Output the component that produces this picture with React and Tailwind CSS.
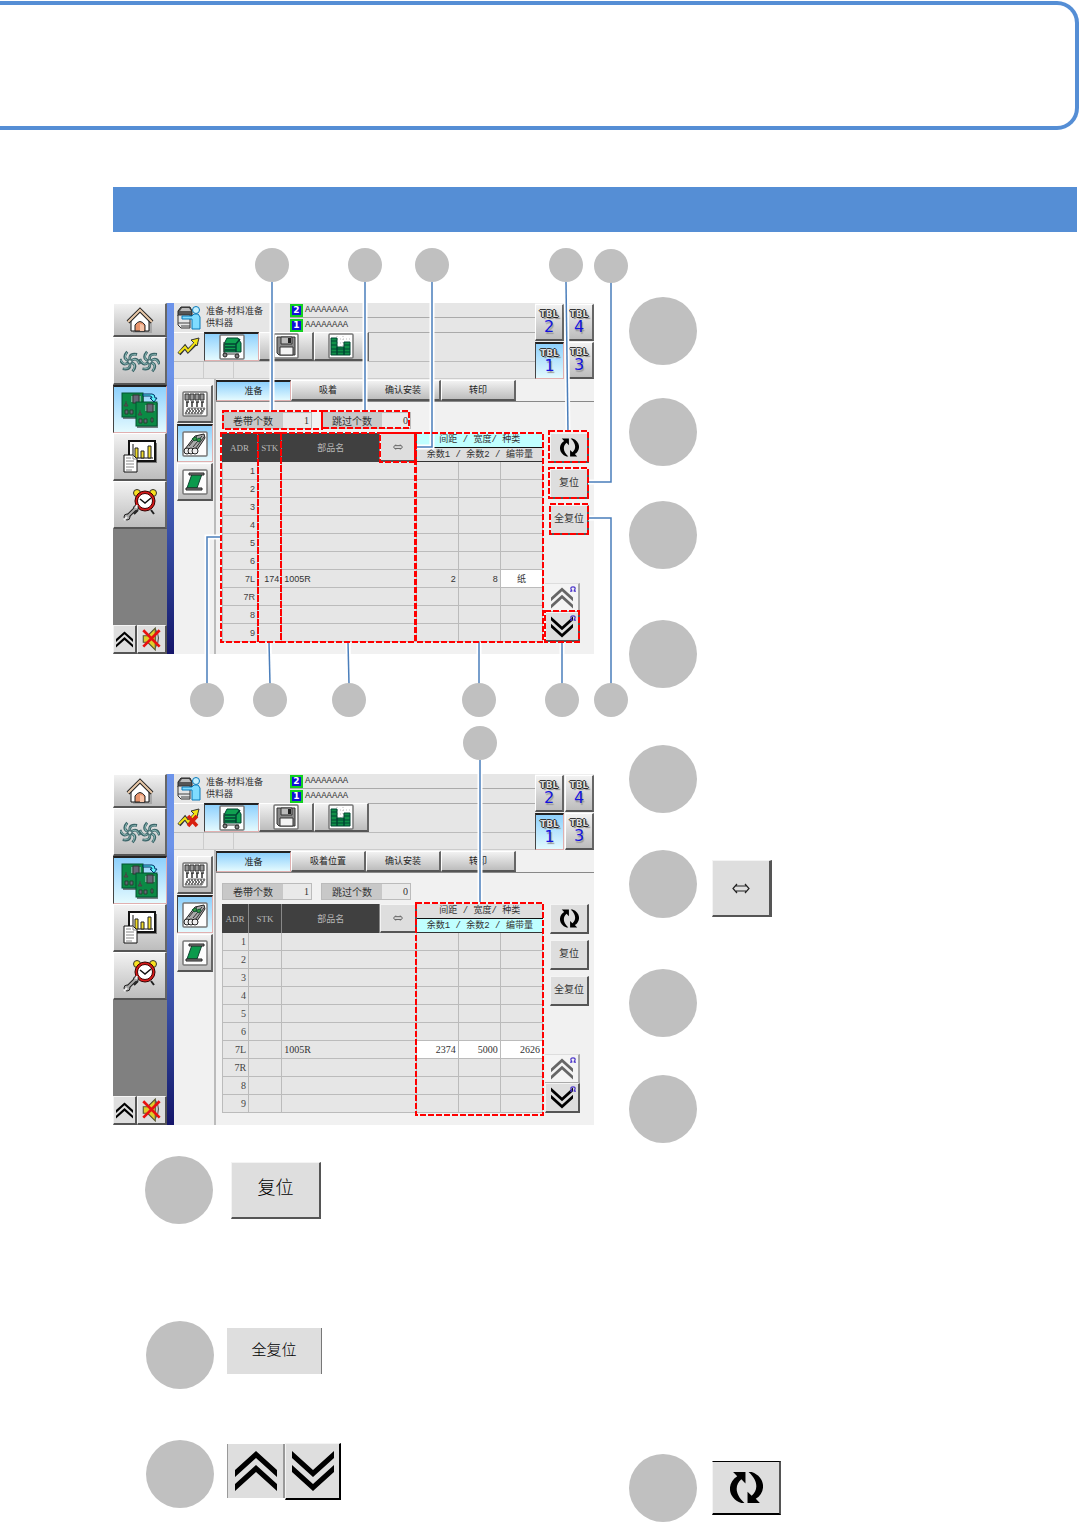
import clsx from "clsx";

const face =
  "flex items-center justify-center border-t border-l border-r-2 border-b-2 border-t-white border-l-white border-r-[#666] border-b-[#555] bg-linear-to-b from-[#f2f2f2] to-[#bdbdbd]";
const faceOn =
  "flex items-center justify-center border-t-2 border-l border-r border-b border-t-[#222] border-l-[#444] border-r-[#e0b0b0] border-b-[#e0b0b0] bg-linear-to-b from-[#8dd0fc] to-[#e4fafe]";
const flat =
  "flex items-center justify-center border-t border-l border-r-2 border-b-2 border-t-[#f4f4f4] border-l-[#f4f4f4] border-r-[#555] border-b-[#555] bg-[#dedede]";

function HomeIcon() {
  return (
    <svg width="28" height="28" viewBox="0 0 28 28">
      <path d="M7 16v11h19V15L16 6z" fill="#888" opacity=".5" />
      <path d="M5 13 14 5l9 8v12H5z" fill="#fff" stroke="#111" />
      <path d="m2 16 12-12 12 12" fill="none" stroke="#222" strokeWidth="4" />
      <path d="m2 16 12-12 12 12" fill="none" stroke="#e8c8a8" strokeWidth="2" />
      <path d="M9 25v-6q5-7 10 0v6z" fill="#e8946c" stroke="#222" />
      <path d="M14 25v-7q3 0 4 2v5z" fill="#f6c4a8" />
    </svg>
  );
}

function Fan({ x, y }) {
  return (
    <g transform={`translate(${x} ${y})`} fill="none">
      {[0, 60, 120, 180, 240, 300].map((a) => (
        <path key={a} d="M0-2C-1-8 3-9 8-8" stroke="#3a6468" strokeWidth="3" transform={`rotate(${a})`} />
      ))}
      {[0, 60, 120, 180, 240, 300].map((a) => (
        <path key={a} d="M0-3C-1-7 3-8 7-8" stroke="#8fbcb8" transform={`rotate(${a})`} />
      ))}
      <circle r="2" fill="#d6e2e0" stroke="#3a6468" />
    </g>
  );
}

function FansIcon() {
  return (
    <svg width="40" height="24" viewBox="0 0 40 24">
      <g transform="scale(.9)">
        <Fan x={11} y={14} />
        <Fan x={33} y={14} />
      </g>
    </svg>
  );
}

function BoardsIcon() {
  return (
    <svg width="38" height="38" viewBox="0 0 38 38">
      {[[1, 2], [15, 11]].map(([x, y]) => (
        <g key={x} transform={`translate(${x} ${y})`}>
          <rect width="21" height="25" x="1" y="1" fill="#333" opacity=".6" />
          <rect width="21" height="24" fill="#0b8a45" stroke="#053" />
          <path d="M9 4h10M9 6h10M9 8h10" stroke="#ccd" />
          <rect x="11" y="2" width="6" height="8" fill="#667" stroke="#333" />
          <path d="m2 13 2-3 2 3zM4 8v2" fill="#555" stroke="#444" />
          <path d="M3 17h3v4H3zM8 17h3v4H8zM15 16h2v4h-2z" fill="#667" stroke="#243" />
        </g>
      ))}
      <path d="M22 3h9q3 0 3 4h2l-3 4-4-4h2q0-2-2-2h-7z" fill="#5cf0f8" stroke="#036" />
    </svg>
  );
}

function ReportIcon() {
  return (
    <svg width="34" height="34" viewBox="0 0 34 34">
      <path d="M8 3h26v20H8z" fill="#777" />
      <path d="M6 1h26v20H6z" fill="#fff" stroke="#111" strokeWidth="2" />
      <path d="M10 4v14h20" fill="none" stroke="#111" />
      <path d="M12 8h3v10h-3zM18 11h3v7h-3zM25 6h3v12h-3z" fill="#f1dc2a" stroke="#222" />
      <path d="M1 15h9l4 4v13H1z" fill="#fff" stroke="#111" />
      <path d="M10 15v4h4M3 18h5M3 21h8M3 24h8M3 27h8M3 30h6" fill="none" stroke="#888" />
    </svg>
  );
}

function ClockIcon() {
  return (
    <svg width="34" height="34" viewBox="0 0 34 34">
      <path d="m15 22-4 4M28 22l3 4" stroke="#222" strokeWidth="2" />
      <circle cx="14" cy="5" r="3.5" fill="#f8e020" stroke="#333" />
      <circle cx="30" cy="5" r="3.5" fill="#f8e020" stroke="#333" />
      <circle cx="22" cy="13" r="10" fill="#d81818" stroke="#300" />
      <circle cx="22" cy="13" r="7.5" fill="#fff" stroke="#400" />
      <path d="m17 11 5 4 6-5" fill="none" stroke="#111" strokeWidth="1.5" />
      <path d="m5 28 8-8" stroke="#222" strokeWidth="4" />
      <circle cx="4" cy="29" r="3" fill="#aaa" stroke="#222" />
      <circle cx="13" cy="20" r="2.5" fill="#aaa" stroke="#222" />
      <path d="m5 28 8-8" stroke="#aaa" strokeWidth="2" />
      <path d="m1 32 3-3M14 17l-1 3" stroke="#eee" strokeWidth="2" />
    </svg>
  );
}

function SpeakerIcon() {
  return (
    <svg width="22" height="24" viewBox="0 0 20 22">
      <path d="M13 2q6 8 0 17" fill="#ccc" stroke="#555" />
      <path d="M2 8h4l7-7v20l-7-7H2z" fill="#e0cc28" stroke="#553" />
      <path d="m2 3 15 15M17 3 2 18" stroke="#e81010" strokeWidth="2.500" />
    </svg>
  );
}

function Chevrons({ down, size, color = "#000" }) {
  return (
    <svg width={size} height={size} viewBox="0 0 42 40" fill={color}>
      <g transform={down ? "matrix(1 0 0 -1 0 40)" : undefined}>
        <path d="M0 19 21 0l21 19v7L21 7 0 26z" />
        <path d="M0 33 21 14l21 19v7L21 21 0 40z" />
      </g>
    </svg>
  );
}

function CycleIcon({ size }) {
  const arrow = "M3 1h12v11l-4-4C5 13 4 22 14 31h-3C-3 26-3 11 7 5z";
  return (
    <svg width={size} height={size} viewBox="0 0 32 32">
      <path d={arrow} />
      <path d={arrow} transform="rotate(180 16 16)" />
    </svg>
  );
}

function SwapIcon({ width }) {
  return (
    <svg width={width} viewBox="0 0 18 11" fill="none" stroke="#222">
      <path d="M5 1 1 5.500 5 10M13 1l4 4.500-4 4.500M4 3h10M4 8h10" strokeWidth="1.200" />
    </svg>
  );
}

function LoopMark() {
  return (
    <svg className="absolute top-0.5 right-0.5" width="6" height="6" viewBox="0 0 7 7">
      <path d="M0 6h2V5Q1 4 1 3q0-2 2.500-2T6 3q0 1-1 2v1h2" fill="none" stroke="#4a34c8" strokeWidth="1.400" />
    </svg>
  );
}

function OperatorIcon() {
  return (
    <svg width="24" height="24" viewBox="0 0 24 24">
      <path d="M4 1h9l2 4v5H1V5z" fill="#555" stroke="#222" />
      <path d="M5 2h7l2 3H3z" fill="#bbb" />
      <path d="M1 9h12v13H4l-3-3z" fill="#e4e4e4" stroke="#333" />
      <path d="M1 17h12M4 20h9" stroke="#444" />
      <path d="M5 10h10l2-2h4l2 3v12h-8V13H5z" fill="#7fdcff" stroke="#0878b8" />
      <circle cx="19" cy="4" r="3.500" fill="#c4f0ff" stroke="#0878b8" />
    </svg>
  );
}

function TrendIcon({ off }) {
  return (
    <svg width="26" height="24" viewBox="0 0 26 24">
      <path d="m3 19 6-7 3 4 9-9" fill="none" stroke="#333" strokeWidth="4" />
      <path d="m15 5 8-2-2 8z" fill="#f3e414" stroke="#333" />
      <path d="m3 18 6-6 3 4 8-9" fill="none" stroke="#f3e414" strokeWidth="2" />
      {off && <path d="m12 10 9 10m0-10-9 10" stroke="#d82010" strokeWidth="3.500" />}
    </svg>
  );
}

function Framed({ children }) {
  return (
    <svg width="26" height="26" viewBox="0 0 26 26">
      <rect x="1" y="1" width="24" height="24" rx="1" fill="#fdfdfd" stroke="#777" strokeWidth="1.500" />
      {children}
    </svg>
  );
}

function CartIcon() {
  return (
    <Framed>
      <path d="M8 4h11l3 5v9H5V10z" fill="#10a050" stroke="#043" />
      <path d="M6 10h11v8M17 10l4-5M6 13h11M6 16h11" fill="none" stroke="#043" strokeWidth="1.500" />
      <path d="M5 8v12h15" fill="none" stroke="#333" />
      <circle cx="6" cy="21" r="2" fill="#888" stroke="#222" />
      <circle cx="18" cy="22" r="2" fill="#888" stroke="#222" />
    </Framed>
  );
}

function DiskIcon() {
  return (
    <Framed>
      <path d="M4 4h18v18H6l-2-2z" fill="#888" stroke="#333" />
      <path d="M8 4h11v7H8z" fill="#bbb" stroke="#333" />
      <path d="M15 5h3v5h-3z" fill="#222" />
      <path d="M7 14h13v8H7z" fill="#f4f4f4" stroke="#333" />
    </Framed>
  );
}

function StockIcon() {
  return (
    <Framed>
      <path d="M3 6h20M3 10h20M3 14h20M9 3v20M15 3v20" stroke="#bbb" strokeDasharray="1 2" />
      <path d="M3 5h6v17H3zM9 14h7v8H9zM16 9h6v13h-6z" fill="#0f9048" stroke="#043" />
      <path d="M3 8h6M3 12h6M3 16h19M3 19h19M16 12h6" stroke="#043" />
    </Framed>
  );
}

function NozzleIcon() {
  return (
    <Framed>
      <path d="M3 3h4v6H3zM8 3h4v6H8zM13 3h4v6h-4zM18 3h4v6h-4z" fill="#999" stroke="#333" />
      <path d="M4 11h3M9 11h3M14 11h3M19 11h3M5 11v5M10 11v5M15 11v5M20 11v5" stroke="#333" strokeWidth="1.500" />
      <path d="M6 18h17M4 20h17M3 22h17" stroke="#444" strokeWidth="1.500" strokeDasharray="2 1" />
      <path d="m3 23 3-6h17l-3 6z" fill="none" stroke="#777" />
    </Framed>
  );
}

function FeederIcon() {
  return (
    <Framed>
      <path d="m3 18 10-13 9-2 1 4-10 15z" fill="#aaa" stroke="#222" />
      <path d="m7 15 8-10M11 16 20 5M13 18l9-12" stroke="#333" />
      <path d="M10 8l3-2 2 1-2 3zM14 9l3-2 2 1-2 3z" fill="#2f9a40" stroke="#153" />
      <circle cx="5" cy="20" r="3" fill="#eee" stroke="#222" />
      <circle cx="9" cy="20" r="3" fill="#eee" stroke="#222" />
      <circle cx="13" cy="20" r="3" fill="#eee" stroke="#222" />
    </Framed>
  );
}

function ReelIcon() {
  return (
    <Framed>
      <path d="M10 5h10l-5 14H5z" fill="#0b9a4c" stroke="#143" />
      <path d="M7 4h15v2H7zM4 19h16v2H4z" fill="#888" stroke="#222" />
    </Framed>
  );
}

const navItems = [
  { label: "home", icon: HomeIcon, size: "h-[34px]" },
  { label: "run", icon: FansIcon, size: "h-12" },
  { label: "prepare", icon: BoardsIcon, size: "h-12", on: true },
  { label: "report", icon: ReportIcon, size: "h-12" },
  { label: "service", icon: ClockIcon, size: "h-12" },
];

function Nav() {
  return (
    <nav className="flex w-[54px] shrink-0 flex-col bg-[#808080]">
      {navItems.map(({ label, icon: Icon, size, on }) => (
        <button key={label} aria-label={label} className={clsx(size, on ? faceOn : face)}>
          <Icon />
        </button>
      ))}
      <div className="mt-auto flex h-[29px]">
        <button aria-label="expand" className={clsx(flat, "w-6")}>
          <Chevrons size={17} />
        </button>
        <button aria-label="mute" className={clsx(flat, "flex-1")}>
          <SpeakerIcon />
        </button>
      </div>
    </nav>
  );
}

function TableButton({ n, on }) {
  return (
    <button className={clsx(on ? faceOn : face, "flex-col")}>
      <span className="font-['DejaVu_Sans'] text-[9px] leading-[10px] font-bold text-[#ddd] [text-shadow:1px_0_#222,-1px_0_#333,0_1px_#222,0_-1px_#333,2px_2px_1px_#888]">
        TBL
      </span>
      <span className="font-['DejaVu_Sans'] text-base leading-4 text-[#1414dc] [text-shadow:1px_2px_1px_#999]">
        {n}
      </span>
    </button>
  );
}

function TopBar({ off }) {
  return (
    <header className="flex h-[76px]">
      <div className="flex min-w-0 flex-1 flex-col bg-[#e6e6e6]">
        <div className="flex h-[29px] text-[9px] leading-3 text-[#333]">
          <div className="flex w-[30px] items-center pl-[3px]">
            <OperatorIcon />
          </div>
          <h2 className="w-[86px] pt-0.5 pl-0.5">
            准备-材料准备
            <br />
            供料器
          </h2>
          <ul className="flex-1">
            {[2, 1].map((n) => (
              <li key={n} className="flex h-[15px] items-center gap-0.5 border-b border-[#aaa]">
                <b className="flex h-[13px] w-[13px] items-center justify-center border-2 border-[#12d020] bg-[#1010d8] font-['DejaVu_Sans'] text-[9px] leading-[9px] text-white">
                  {n}
                </b>
                <span className="font-['Liberation_Mono'] leading-[10px]">AAAAAAAA</span>
              </li>
            ))}
          </ul>
        </div>
        <div className="flex h-[30px] border-b border-[#bbb]">
          <div className="flex w-[30px] items-center justify-center border-t border-white">
            <TrendIcon off={off} />
          </div>
          <button aria-label="cart" className={clsx(faceOn, "w-[55px]")}>
            <CartIcon />
          </button>
          <button aria-label="save" className={clsx(face, "w-[55px]")}>
            <DiskIcon />
          </button>
          <button aria-label="stock" className={clsx(face, "w-[55px]")}>
            <StockIcon />
          </button>
        </div>
        <div className="flex flex-1 border-b border-[#ccc]">
          <span className="w-[30px] border-r border-[#ccc]" />
          <span className="w-[30px] border-r border-[#ccc]" />
        </div>
      </div>
      <div className="grid w-[59px] grid-cols-2 grid-rows-2 gap-px bg-[#eee] pt-px">
        <TableButton n={2} />
        <TableButton n={4} />
        <TableButton n={1} on />
        <TableButton n={3} />
      </div>
    </header>
  );
}

function Field({ id, label, value }) {
  return (
    <div className="flex h-[17px] w-[90px] border border-[#bbb] text-[10px] leading-[15px] text-[#333]">
      <label htmlFor={id} className="w-[60px] bg-[#c8c8c8] text-center">
        {label}
      </label>
      <input id={id} readOnly defaultValue={value} className="w-7 bg-[#e9e9e9] pr-0.5 text-right font-['Liberation_Serif']" />
    </div>
  );
}

const addresses = ["1", "2", "3", "4", "5", "6", "7L", "7R", "8", "9"];

function FeederTable({ wideAdr, stk, cells, lit, dataFont }) {
  const head = "border-r border-[#888] bg-[#404040] font-normal text-[#b8b8b8]";
  const groupHead =
    "border-b p-0 font-['Liberation_Mono','Noto_Sans_CJK_SC',monospace] font-normal whitespace-pre text-[#333]";
  const cell = "h-[18px] border-b border-[#bbb] p-0";
  return (
    <table className="w-[321px] table-fixed border-separate border-spacing-0 text-[9px] leading-3">
      <colgroup>
        <col className={wideAdr ? "w-9" : "w-[27px]"} />
        <col className={wideAdr ? "w-6" : "w-[33px]"} />
        <col className="w-[98px]" />
        <col className="w-9" />
        <col className="w-[42px]" />
        <col className="w-[42px]" />
        <col className="w-[42px]" />
      </colgroup>
      <thead>
        <tr className="h-[15px]">
          <th rowSpan={2} className={clsx(head, "font-['Liberation_Serif']")}>ADR</th>
          <th rowSpan={2} className={clsx(head, "font-['Liberation_Serif']")}>STK</th>
          <th rowSpan={2} className={head}>部品名</th>
          <th rowSpan={2} className="h-[29px] p-0">
            <button aria-label="swap" className={clsx(flat, "h-[29px] w-full")}>
              <SwapIcon width={10} />
            </button>
          </th>
          <th colSpan={3} className={clsx(groupHead, "h-[15px] border-[#111]", lit === "top" ? "bg-[#c0ffff]" : "bg-[#dedede]")}>
            间距 / 宽度/ 种类
          </th>
        </tr>
        <tr className="h-[14px]">
          <th colSpan={3} className={clsx(groupHead, "h-[14px] border-[#333]", lit === "bottom" ? "bg-[#c0ffff]" : "bg-[#dedede]")}>
            余数1 / 余数2 / 编带量
          </th>
        </tr>
      </thead>
      <tbody className={clsx("text-right text-[#333]", dataFont)}>
        {addresses.map((adr) => {
          const full = adr === "7L";
          return (
            <tr key={adr} className="bg-[#e6e6e6]">
              <td className={clsx(cell, "border-r border-l pr-0.5 text-[#444]")}>{adr}</td>
              <td className={clsx(cell, "border-r pr-0.5")}>{full && stk}</td>
              <td colSpan={2} className={clsx(cell, "border-r pl-0.5 text-left")}>{full && "1005R"}</td>
              {cells.map((c, i) => (
                <td
                  key={i}
                  className={clsx(
                    cell,
                    "border-r",
                    c === "纸" ? "text-center" : "pr-0.5",
                    full && (c === "纸" || lit === "bottom") && "bg-white"
                  )}
                >
                  {full && c}
                </td>
              ))}
            </tr>
          );
        })}
      </tbody>
    </table>
  );
}

function Screen({ id, off, tabs, table }) {
  return (
    <section className="flex h-[351px] w-[481px] bg-[#f1f1f1] font-['Noto_Sans_CJK_SC',sans-serif]">
      <Nav />
      <div className="w-[7px] shrink-0 bg-linear-to-b from-[#6c93ea] from-20% via-[#3f58b0] via-60% to-[#15156a]" />
      <div className="flex min-w-0 flex-1 flex-col">
        <TopBar off={off} />
        <div className="flex flex-1">
          <aside className="flex w-[42px] flex-col gap-px border-r-2 border-[#bbb] pt-1.5 pl-[3px]">
            <button aria-label="nozzle" className={clsx(face, "h-[38px] w-9")}>
              <NozzleIcon />
            </button>
            <button aria-label="feeder" className={clsx(faceOn, "h-[38px] w-9")}>
              <FeederIcon />
            </button>
            <button aria-label="reel" className={clsx(face, "h-[38px] w-9")}>
              <ReelIcon />
            </button>
          </aside>
          <div className="flex-1">
            <div className="flex h-[23px] border-b border-[#888] pt-px text-[9px] text-[#222]">
              {tabs.map((t, i) => (
                <button key={t} className={clsx(i === 0 ? faceOn : face, "w-[75px]")}>
                  {t}
                </button>
              ))}
            </div>
            <div className="flex gap-[9px] pt-2.5 pl-1.5">
              <Field id={`${id}-reels`} label="卷带个数" value="1" />
              <Field id={`${id}-skips`} label="跳过个数" value="0" />
            </div>
            <div className="flex pt-1 pl-1.5">
              <FeederTable {...table} />
              <div className="flex flex-1 flex-col">
                <div className="flex flex-col gap-1.5 pl-[7px] text-[10px] text-[#333]">
                  <button aria-label="cycle" className={clsx(flat, "h-[30px] w-[39px]")}>
                    <CycleIcon size={19} />
                  </button>
                  <button className={clsx(flat, "h-[30px] w-[39px] pb-1")}>复位</button>
                  <button className={clsx(flat, "h-[30px] w-[39px] pb-1")}>全复位</button>
                </div>
                <div className="mt-auto flex flex-col pl-0.5">
                  <button aria-label="page up" className="relative flex h-[29px] w-[35px] items-center justify-center border-t border-r-2 border-b border-[#aaa] border-t-[#ddd] bg-[#f4f4f4]">
                    <Chevrons size={22} color="#666" />
                    <LoopMark />
                  </button>
                  <button aria-label="page down" className={clsx(flat, "relative h-[30px] w-[35px]")}>
                    <Chevrons size={22} down />
                    <LoopMark />
                  </button>
                </div>
              </div>
            </div>
          </div>
        </div>
      </div>
    </section>
  );
}

// dots: [cx, cy], lines: polyline points, boxes: [x1, y1, x2, y2]
function Callouts({ dots, lines, boxes }) {
  return (
    <svg className="pointer-events-none absolute top-0 left-0 h-full w-full" fill="none">
      {lines.map((p) => (
        <g key={p}>
          <polyline points={p} stroke="#fff" strokeWidth="5" />
          <polyline points={p} stroke="#4a7ebb" strokeWidth="1.500" />
        </g>
      ))}
      {boxes.map(([x, y, x2, y2]) => (
        <rect key={`${x}-${y}`} x={x} y={y} width={x2 - x} height={y2 - y} stroke="#f00" strokeWidth="2" strokeDasharray="6 2" />
      ))}
      {dots.map(([x, y]) => (
        <circle key={`${x}-${y}`} cx={x} cy={y} r="17" fill="#c0c0c0" />
      ))}
    </svg>
  );
}

const first = {
  dots: [[159, 33], [252, 33], [319, 33], [453, 33], [498, 34], [94, 468], [157, 468], [236, 468], [366, 468], [449, 468], [498, 468]],
  lines: [
    "159,50 159,179",
    "252,50 252,179",
    "319,50 319,215 303,215",
    "453,50 455,200",
    "498,50 498,250 475,250",
    "475,286 498,286 498,452",
    "108,305 94,305 94,452",
    "156,410 157,452",
    "235,410 236,452",
    "366,410 366,452",
    "449,410 449,452",
  ],
  boxes: [
    [110, 179, 209, 197], [209, 179, 296, 196],
    [108, 201, 145, 410], [145, 201, 168, 410], [168, 201, 302, 410], [267, 201, 302, 230],
    [303, 201, 430, 410],
    [436, 199, 475, 230], [436, 236, 475, 266], [437, 272, 475, 302], [432, 379, 466, 410],
  ],
};

const second = {
  dots: [[367, 17]],
  lines: ["367,34 367,176"],
  boxes: [[303, 177, 430, 389]],
};

const notes = [
  "mt-0", "mt-[33px]", "mt-[35px]", "mt-[51px]", "mt-[57px]", "mt-[37px]", "mt-[51px]", "mt-[38px]", "mt-[311px]",
];

function Dot() {
  return <span className="size-[68px] shrink-0 rounded-full bg-[#c0c0c0]" />;
}

export default function App() {
  return (
    <div className="bg-white pt-px font-['Noto_Sans_CJK_SC',sans-serif]">
      <div className="mr-px h-[129px] rounded-r-[22px] border-4 border-l-0 border-[#558ed5]" />
      <div className="mt-[57px] mr-[3px] ml-[113px] h-[45px] bg-[#558ed5]" />
      <main className="flex pl-[113px]">
        <div className="w-[516px] shrink-0">
          <figure className="relative pt-[71px] pb-[72px]">
            <Screen
              id="a"
              tabs={["准备", "吸着", "确认安装", "转印"]}
              table={{
                wideAdr: true,
                stk: "174",
                cells: ["2", "8", "纸"],
                lit: "top",
                dataFont: "font-['Liberation_Sans','Noto_Sans_CJK_SC',sans-serif]",
              }}
            />
            <Callouts {...first} />
          </figure>
          <figure className="relative pt-12">
            <Screen
              id="b"
              off
              tabs={["准备", "吸着位置", "确认安装", "转印"]}
              table={{
                cells: ["2374", "5000", "2626"],
                lit: "bottom",
                dataFont: "font-['Liberation_Serif',serif] text-[10px]",
              }}
            />
            <Callouts {...second} />
          </figure>
          <div className="mt-[31px] flex gap-[18px] pl-8">
            <Dot />
            <button className={clsx(flat, "mt-1.5 h-[57px] w-[90px] border-b-[#333] pb-2 text-lg font-light")}>复位</button>
          </div>
          <div className="mt-[97px] flex gap-[13px] pl-[33px]">
            <Dot />
            <button className="mt-[7px] h-[46px] w-[95px] border-r border-[#777] bg-[#dedede] pb-1 text-[15px] font-light">全复位</button>
          </div>
          <div className="mt-[51px] flex pb-[15px] pl-[33px]">
            <Dot />
            <button aria-label="page up" className="mt-1 ml-[13px] flex h-[54px] w-[58px] items-center justify-center border-r-2 border-l border-[#999] bg-[#dedede]">
              <Chevrons size={42} />
            </button>
            <button aria-label="page down" className={clsx(flat, "mt-[3px] h-[57px] w-14 border-r-black border-b-black")}>
              <Chevrons size={42} down />
            </button>
          </div>
        </div>
        <ul className="flex-1 pt-[65px]">
          {notes.map((gap, i) => (
            <li key={i} className={clsx("flex gap-[15px]", gap)}>
              <Dot />
              {i === 5 && (
                <button aria-label="swap" className={clsx(flat, "mt-2.5 h-[57px] w-[60px] border-r-[3px] border-r-[#222]")}>
                  <SwapIcon width={18} />
                </button>
              )}
              {i === 8 && (
                <button aria-label="cycle" className={clsx(flat, "mt-[7px] h-[54px] w-[69px] border-t-black border-b-black")}>
                  <CycleIcon size={33} />
                </button>
              )}
            </li>
          ))}
        </ul>
      </main>
    </div>
  );
}
